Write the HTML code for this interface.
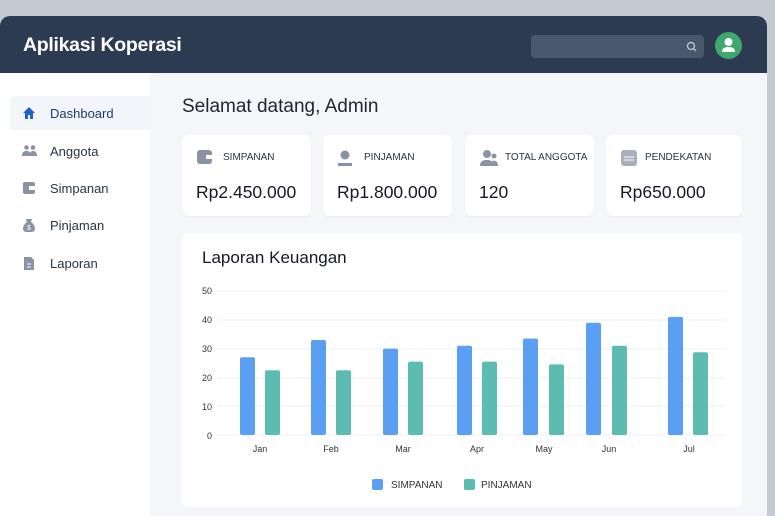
<!DOCTYPE html>
<html><head><style>
*{margin:0;padding:0;box-sizing:border-box}
body{width:775px;height:511px;overflow:hidden;background:#c4cad2;font-family:"Liberation Sans",sans-serif;position:relative}
.win{position:absolute;left:0;top:16px;width:767px;height:500px;background:#f4f6f9;border-radius:10px 10px 0 0;overflow:hidden}
.hdr{position:absolute;left:0;top:0;width:100%;height:57px;background:#2c3a52}
.hdr h1{position:absolute;left:23px;top:18px;color:#fff;font-size:19.5px;font-weight:bold;letter-spacing:-0.3px}
.search{position:absolute;left:531px;top:19px;width:173px;height:23px;background:#4a586d;border-radius:4px}
.av{position:absolute;left:715px;top:16px;width:27px;height:27px;border-radius:50%;background:#3fa86e}
.side{position:absolute;left:0;top:57px;width:150px;height:450px;background:#fff}
.nav{position:absolute;left:10px;width:140px;height:34px;font-size:13px;color:#2a3342}
.nav span{position:absolute;left:40px;top:10px}
.nav svg{position:absolute;left:12px;top:10px}
.act{background:#f2f5f9;border-radius:4px 0 0 4px}
.act span{color:#1d3c6e}
h2{position:absolute;left:182px;top:96px;font-size:19px;font-weight:normal;color:#1e2430}
.card{position:absolute;top:135px;height:81px;background:#fff;border-radius:6px;box-shadow:0 1px 2px rgba(0,0,0,.05)}
.card .l{position:absolute;left:41px;top:17px;font-size:10px;color:#2a3342;white-space:nowrap}
.card .v{position:absolute;left:14px;top:47px;font-size:17.5px;color:#151a22}
.card svg{position:absolute;left:14px;top:14px}
.chart{position:absolute;left:182px;top:233px;width:560px;height:274px;background:#fff;border-radius:6px}
.chart h3{position:absolute;left:20px;top:15px;font-size:17px;font-weight:normal;color:#151a22}
</style></head><body>
<div class="win">
<div class="hdr"><h1>Aplikasi Koperasi</h1>
<div class="search"><svg width="12" height="12" style="position:absolute;left:155px;top:6px" viewBox="0 0 12 12"><circle cx="5" cy="5" r="3.5" fill="none" stroke="#c9d0da" stroke-width="1.2"/><path d="M7.5 7.5L10 10" stroke="#c9d0da" stroke-width="1.2"/></svg></div>
<div class="av"><svg width="27" height="27" viewBox="0 0 27 27"><circle cx="13.5" cy="10" r="4" fill="#fff"/><path d="M7 20c0-4 3-5 6.5-5s6.5 1 6.5 5z" fill="#fff"/></svg></div>
</div>
<div class="side">
<div class="nav act" style="top:23px"><svg width="14" height="14" viewBox="0 0 14 14"><path d="M7 1L1 7h2v6h3V9h2v4h3V7h2z" fill="#1e64c8"/></svg><span>Dashboard</span></div>
<div class="nav" style="top:61px"><svg width="16" height="14" viewBox="0 0 16 14"><circle cx="4.5" cy="3.5" r="2.3" fill="#8a93a3"/><circle cx="11" cy="3.5" r="2.3" fill="#8a93a3"/><path d="M0 12c0-4 2-5 4.5-5S9 8 9 12zM8 12c0-4 1-5 3-5s4 1 4 5z" fill="#8a93a3"/></svg><span>Anggota</span></div>
<div class="nav" style="top:98px"><svg width="14" height="14" viewBox="0 0 14 14"><rect x="1" y="1" width="12" height="12" rx="2" fill="#8a93a3"/><rect x="7" y="5" width="6" height="4" fill="#fff"/></svg><span>Simpanan</span></div>
<div class="nav" style="top:135px"><svg width="14" height="15" viewBox="0 0 14 15"><path d="M4 1h6l-1 3c3 2 4 5 4 7 0 3-3 3-6 3s-6 0-6-3c0-2 1-5 4-7z" fill="#8a93a3"/><text x="5" y="12" font-size="7" fill="#fff">$</text></svg><span>Pinjaman</span></div>
<div class="nav" style="top:173px"><svg width="14" height="15" viewBox="0 0 14 15"><path d="M2 1h7l3 3v10H2z" fill="#8a93a3"/><path d="M5 8h4M5 11h4" stroke="#fff"/></svg><span>Laporan</span></div>
</div>
<h2 style="top:80px">Selamat datang, Admin</h2>
</div>
<div class="card" style="left:182px;width:129px"><svg width="20" height="16" viewBox="0 0 20 16"><rect x="1" y="1" width="15" height="14" rx="3" fill="#8a93a3"/><rect x="10" y="6" width="6" height="4" fill="#fff"/></svg><div class="l">SIMPANAN</div><div class="v">Rp2.450.000</div></div>
<div class="card" style="left:323px;width:129px"><svg width="20" height="18" viewBox="0 0 20 18"><circle cx="8" cy="6" r="4.5" fill="#8a93a3"/><path d="M1 14h14v3H1z" fill="#8a93a3"/></svg><div class="l">PINJAMAN</div><div class="v">Rp1.800.000</div></div>
<div class="card" style="left:465px;width:129px"><svg width="22" height="18" viewBox="0 0 22 18"><circle cx="8" cy="5" r="4" fill="#8a93a3"/><circle cx="15" cy="7" r="2.5" fill="#8a93a3"/><path d="M1 17c0-5 3-6 7-6s6 1 6 6zM14 17c0-3-1-5-1-5 3-1 6 0 6 5z" fill="#8a93a3"/></svg><div class="l" style="left:40px">TOTAL ANGGOTA</div><div class="v">120</div></div>
<div class="card" style="left:606px;width:136px"><svg width="18" height="18" viewBox="0 0 18 18"><rect x="1" y="1" width="16" height="16" rx="3" fill="#a9b0bb"/><path d="M4 8h10M4 11h10" stroke="#fff"/></svg><div class="l" style="left:39px">PENDEKATAN</div><div class="v">Rp650.000</div></div>
<div class="chart"><h3>Laporan Keuangan</h3></div>
<svg style="position:absolute;left:0;top:0" width="775" height="511">
<g stroke="#eceff3" stroke-width="1"><line x1="217" y1="291" x2="725" y2="291"/><line x1="217" y1="320" x2="725" y2="320"/><line x1="217" y1="349" x2="725" y2="349"/><line x1="217" y1="378" x2="725" y2="378"/><line x1="217" y1="406" x2="725" y2="406"/><line x1="217" y1="435" x2="725" y2="435"/></g>
<g font-family="Liberation Sans" font-size="9" fill="#333"><text x="202" y="294">50</text><text x="202" y="323">40</text><text x="202" y="352">30</text><text x="202" y="381">20</text><text x="202" y="410">10</text><text x="207" y="439">0</text>
<g text-anchor="middle"><text x="260" y="452">Jan</text><text x="331" y="452">Feb</text><text x="403" y="452">Mar</text><text x="477" y="452">Apr</text><text x="544" y="452">May</text><text x="609" y="452">Jun</text><text x="689" y="452">Jul</text></g>
<text x="391" y="488" font-size="10">SIMPANAN</text><text x="481" y="488" font-size="10">PINJAMAN</text></g>
<rect x="372" y="479" width="11" height="11" rx="2" fill="#5b9ff2"/><rect x="464" y="479" width="11" height="11" rx="2" fill="#5dbcb1"/>
<g fill="#5b9ff2">
<rect x="240" y="357.2" width="15" height="77.8" rx="2"/><rect x="311" y="340" width="15" height="95" rx="2"/><rect x="383" y="348.6" width="15" height="86.4" rx="2"/><rect x="457" y="345.7" width="15" height="89.3" rx="2"/><rect x="523" y="338.5" width="15" height="96.5" rx="2"/><rect x="586" y="322.7" width="15" height="112.3" rx="2"/><rect x="668" y="316.9" width="15" height="118.1" rx="2"/></g>
<g fill="#5dbcb1">
<rect x="265" y="370.2" width="15" height="64.8" rx="2"/><rect x="336" y="370.2" width="15" height="64.8" rx="2"/><rect x="408" y="361.6" width="15" height="73.4" rx="2"/><rect x="482" y="361.6" width="15" height="73.4" rx="2"/><rect x="549" y="364.4" width="15" height="70.6" rx="2"/><rect x="612" y="345.7" width="15" height="89.3" rx="2"/><rect x="693" y="352.3" width="15" height="82.7" rx="2"/></g>
</svg>
</body></html>
